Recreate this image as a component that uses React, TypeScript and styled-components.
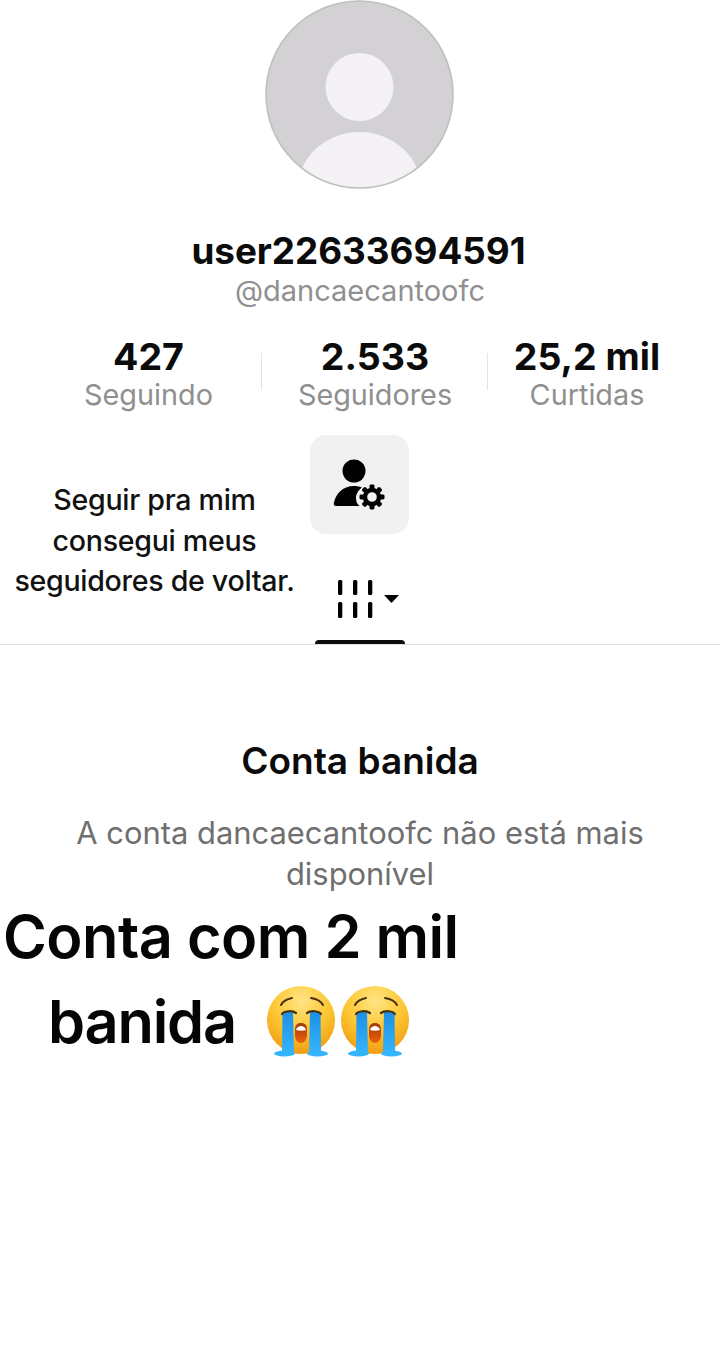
import styled, { createGlobalStyle } from "styled-components";

const GlobalStyle = createGlobalStyle`
  html, body {
    margin: 0;
    padding: 0;
    background: #fff;
    font-family: "Inter", "Liberation Sans", sans-serif;
  }
`;

const Page = styled.main`
  width: 720px;
  height: 1352px;
  overflow: hidden;
  background: #fff;
`;

const Header = styled.header`
  display: flex;
  flex-direction: column;
  align-items: center;
`;

const AvatarFrame = styled.div`
  width: 189px;
  height: 189px;
  margin-left: -1px;
`;

const Name = styled.h1`
  margin: 40px 3px 0 0;
  font-size: 36.8px;
  line-height: 44px;
  font-weight: 700;
  color: #0b0b0b;
`;

const Handle = styled.div`
  margin-top: 0;
  font-size: 29px;
  line-height: 36px;
  color: #909090;
`;

const Stats = styled.div`
  display: grid;
  grid-template-columns: 262px 226px 232px;
  width: 720px;
  margin-top: 26px;
`;

const Stat = styled.div<{ $divided?: boolean; $shiftLeft?: number; $shiftRight?: number }>`
  display: flex;
  flex-direction: column;
  align-items: center;
  position: relative;
  padding-left: ${(p) => p.$shiftLeft ?? 0}px;
  padding-right: ${(p) => p.$shiftRight ?? 0}px;

  &::after {
    content: "";
    display: ${(p) => (p.$divided ? "block" : "none")};
    position: absolute;
    right: 0;
    top: 18px;
    width: 1px;
    height: 37px;
    background: #e4e4e4;
  }
`;

const StatValue = styled.div`
  font-size: 37.5px;
  line-height: 43px;
  font-weight: 700;
  color: #0b0b0b;
`;

const StatLabel = styled.div`
  font-size: 28.8px;
  line-height: 34px;
  color: #8f8f8f;
`;

const Actions = styled.div`
  display: grid;
  grid-template-columns: 309px 101px;
  width: 720px;
  margin-top: 23px;
`;

const Bio = styled.p`
  margin: 45px 0 0;
  text-align: center;
  font-size: 28.6px;
  line-height: 40.5px;
  font-weight: 500;
  letter-spacing: -0.3px;
  white-space: nowrap;
  color: #111;
`;

const ActionColumn = styled.div`
  display: flex;
  flex-direction: column;
  align-items: center;
`;

const ManageButton = styled.button`
  display: flex;
  align-items: center;
  justify-content: center;
  width: 99px;
  height: 99px;
  padding: 0;
  border: 0;
  border-radius: 16px;
  background: #f1f1f2;
`;

const Tab = styled.div`
  display: flex;
  flex-direction: column;
  align-items: center;
  width: 90px;
  margin-top: 46px;

  svg {
    margin-left: 16px;
  }
`;

const TabIndicator = styled.div`
  width: 90px;
  height: 4px;
  margin-top: 21px;
  border-radius: 4px 4px 0 0;
  background: #0b0b0b;
`;

const Rule = styled.hr`
  margin: 0;
  border: 0;
  height: 1px;
  background: #dfdfdf;
`;

const Notice = styled.section`
  display: flex;
  flex-direction: column;
  align-items: center;
  padding: 94px 60px 0;
  text-align: center;
`;

const NoticeTitle = styled.h2`
  margin: 0;
  font-size: 37px;
  line-height: 44px;
  font-weight: 600;
  color: #0b0b0b;
`;

const NoticeBody = styled.p`
  margin: 29px 0 0;
  font-size: 30.9px;
  line-height: 41px;
  color: #6f6f6f;
`;

const Caption = styled.div`
  margin-top: 0;
  font-size: 59.5px;
  line-height: 85px;
  font-weight: 600;
  letter-spacing: -0.5px;
  color: #050505;
`;

const CaptionLine = styled.div<{ $indent: number; $tracking?: number }>`
  display: flex;
  align-items: center;
  padding-left: ${(p) => p.$indent}px;
  letter-spacing: ${(p) => p.$tracking ?? -0.5}px;
`;

const EmojiRow = styled.span`
  display: flex;
  gap: 6px;
  margin-left: 31px;
`;

function Avatar() {
  return (
    <svg width="189" height="189" viewBox="0 0 189 189">
      <defs>
        <clipPath id="avatar-clip">
          <circle cx="94.5" cy="94.5" r="93.5" />
        </clipPath>
      </defs>
      <circle cx="94.5" cy="94.5" r="93.5" fill="#d3d1d4" />
      <g clipPath="url(#avatar-clip)">
        <circle cx="94.5" cy="87" r="34" fill="#f4f2f5" />
        <ellipse cx="94.5" cy="190" rx="62" ry="58" fill="#f4f2f5" />
      </g>
      <circle cx="94.5" cy="94.5" r="93.5" fill="none" stroke="#c0bfc1" strokeWidth="1.6" />
    </svg>
  );
}

function ManageIcon() {
  return (
    <svg width="54" height="52" viewBox="0 0 54 52">
      <circle cx="21" cy="12" r="11.5" fill="#000" />
      <path d="M3 47c-1.600 0-2.500-1.200-2.200-2.700C2.500 35 9.500 27 21 27c3 0 5.500.5 7.800 1.500C24.500 32 23 36 23 39c0 3 1 6 3.500 8z" fill="#000" />
      <g transform="translate(39 38)">
        {[0, 45, 90, 135, 180, 225, 270, 315].map((a) => (
          <rect key={a} x="-2.500" y="-12.500" width="5" height="6" rx="1.400" fill="#000" transform={`rotate(${a})`} />
        ))}
        <circle r="7" fill="none" stroke="#000" strokeWidth="4.400" />
      </g>
    </svg>
  );
}

function GridFilterIcon() {
  return (
    <svg width="64" height="39" viewBox="0 0 64 39">
      {[2, 17, 32].map((x) => (
        <g key={x} fill="#000">
          <rect x={x} y="0" width="4.300" height="15" rx="1.500" />
          <rect x={x} y="22" width="4.300" height="16" rx="1.500" />
        </g>
      ))}
      <path d="M48 15h15l-7.500 8z" fill="#000" />
    </svg>
  );
}

function CryingEmoji({ id }: { id: string }) {
  return (
    <svg width="68" height="72" viewBox="0 0 68 72">
      <defs>
        <radialGradient id={`${id}-face`} cx="50%" cy="22%" r="80%">
          <stop offset="0%" stopColor="#ffe585" />
          <stop offset="55%" stopColor="#fdc530" />
          <stop offset="100%" stopColor="#ef9a10" />
        </radialGradient>
        <linearGradient id={`${id}-mouth`} x1="0" y1="0" x2="0" y2="1">
          <stop offset="0%" stopColor="#a03c0c" />
          <stop offset="100%" stopColor="#f0600a" />
        </linearGradient>
        <linearGradient id={`${id}-tear`} x1="0" y1="0" x2="0" y2="1">
          <stop offset="0%" stopColor="#1c8fe6" />
          <stop offset="100%" stopColor="#35b4fb" />
        </linearGradient>
      </defs>
      <circle cx="34" cy="34" r="34" fill={`url(#${id}-face)`} />
      <path d="M14 19c2-4 6-6 11-7M56 19c-2-4-6-6-12-7" fill="none" stroke="#4a3210" strokeWidth="2" strokeLinecap="round" />
      <path d="M28 44c0-5 2-7 6-7s6 2 6 7v5c0 5-3 8-6 8s-6-3-6-8z" fill={`url(#${id}-mouth)`} />
      <path d="M29 44c1-3 3-4 5-4s4 1 5 4c-3 1-7 1-10 0z" fill="#fff" />
      <path d="M15.500 26h10.500l1 40H15z" fill={`url(#${id}-tear)`} />
      <path d="M43 26h10.500l.5 40H42z" fill={`url(#${id}-tear)`} />
      <ellipse cx="17.500" cy="67.500" rx="10.500" ry="3" fill="#35b4fb" />
      <ellipse cx="50.500" cy="67.500" rx="10.500" ry="3" fill="#35b4fb" />
      <path d="M15 28c2-3 10-4 14-1M40 27c4-3 12-2 14 1" fill="none" stroke="#4a3210" strokeWidth="2.200" strokeLinecap="round" />
    </svg>
  );
}

export default function App() {
  return (
    <Page>
      <GlobalStyle />
      <Header>
        <AvatarFrame>
          <Avatar />
        </AvatarFrame>
        <Name>user22633694591</Name>
        <Handle>@dancaecantoofc</Handle>
      </Header>
      <Stats>
        <Stat $divided $shiftLeft={35}>
          <StatValue>427</StatValue>
          <StatLabel>Seguindo</StatLabel>
        </Stat>
        <Stat $divided>
          <StatValue>2.533</StatValue>
          <StatLabel>Seguidores</StatLabel>
        </Stat>
        <Stat $shiftRight={34}>
          <StatValue>25,2 mil</StatValue>
          <StatLabel>Curtidas</StatLabel>
        </Stat>
      </Stats>
      <Actions>
        <Bio>
          Seguir pra mim
          <br />
          consegui meus
          <br />
          seguidores de voltar.
        </Bio>
        <ActionColumn>
          <ManageButton aria-label="Gerenciar conta">
            <ManageIcon />
          </ManageButton>
          <Tab>
            <GridFilterIcon />
            <TabIndicator />
          </Tab>
        </ActionColumn>
      </Actions>
      <Rule />
      <Notice>
        <NoticeTitle>Conta banida</NoticeTitle>
        <NoticeBody>A conta dancaecantoofc não está mais disponível</NoticeBody>
      </Notice>
      <Caption>
        <CaptionLine $indent={3}>Conta com 2 mil</CaptionLine>
        <CaptionLine $indent={48} $tracking={-1.2}>
          banida
          <EmojiRow>
            <CryingEmoji id="cry-a" />
            <CryingEmoji id="cry-b" />
          </EmojiRow>
        </CaptionLine>
      </Caption>
    </Page>
  );
}
